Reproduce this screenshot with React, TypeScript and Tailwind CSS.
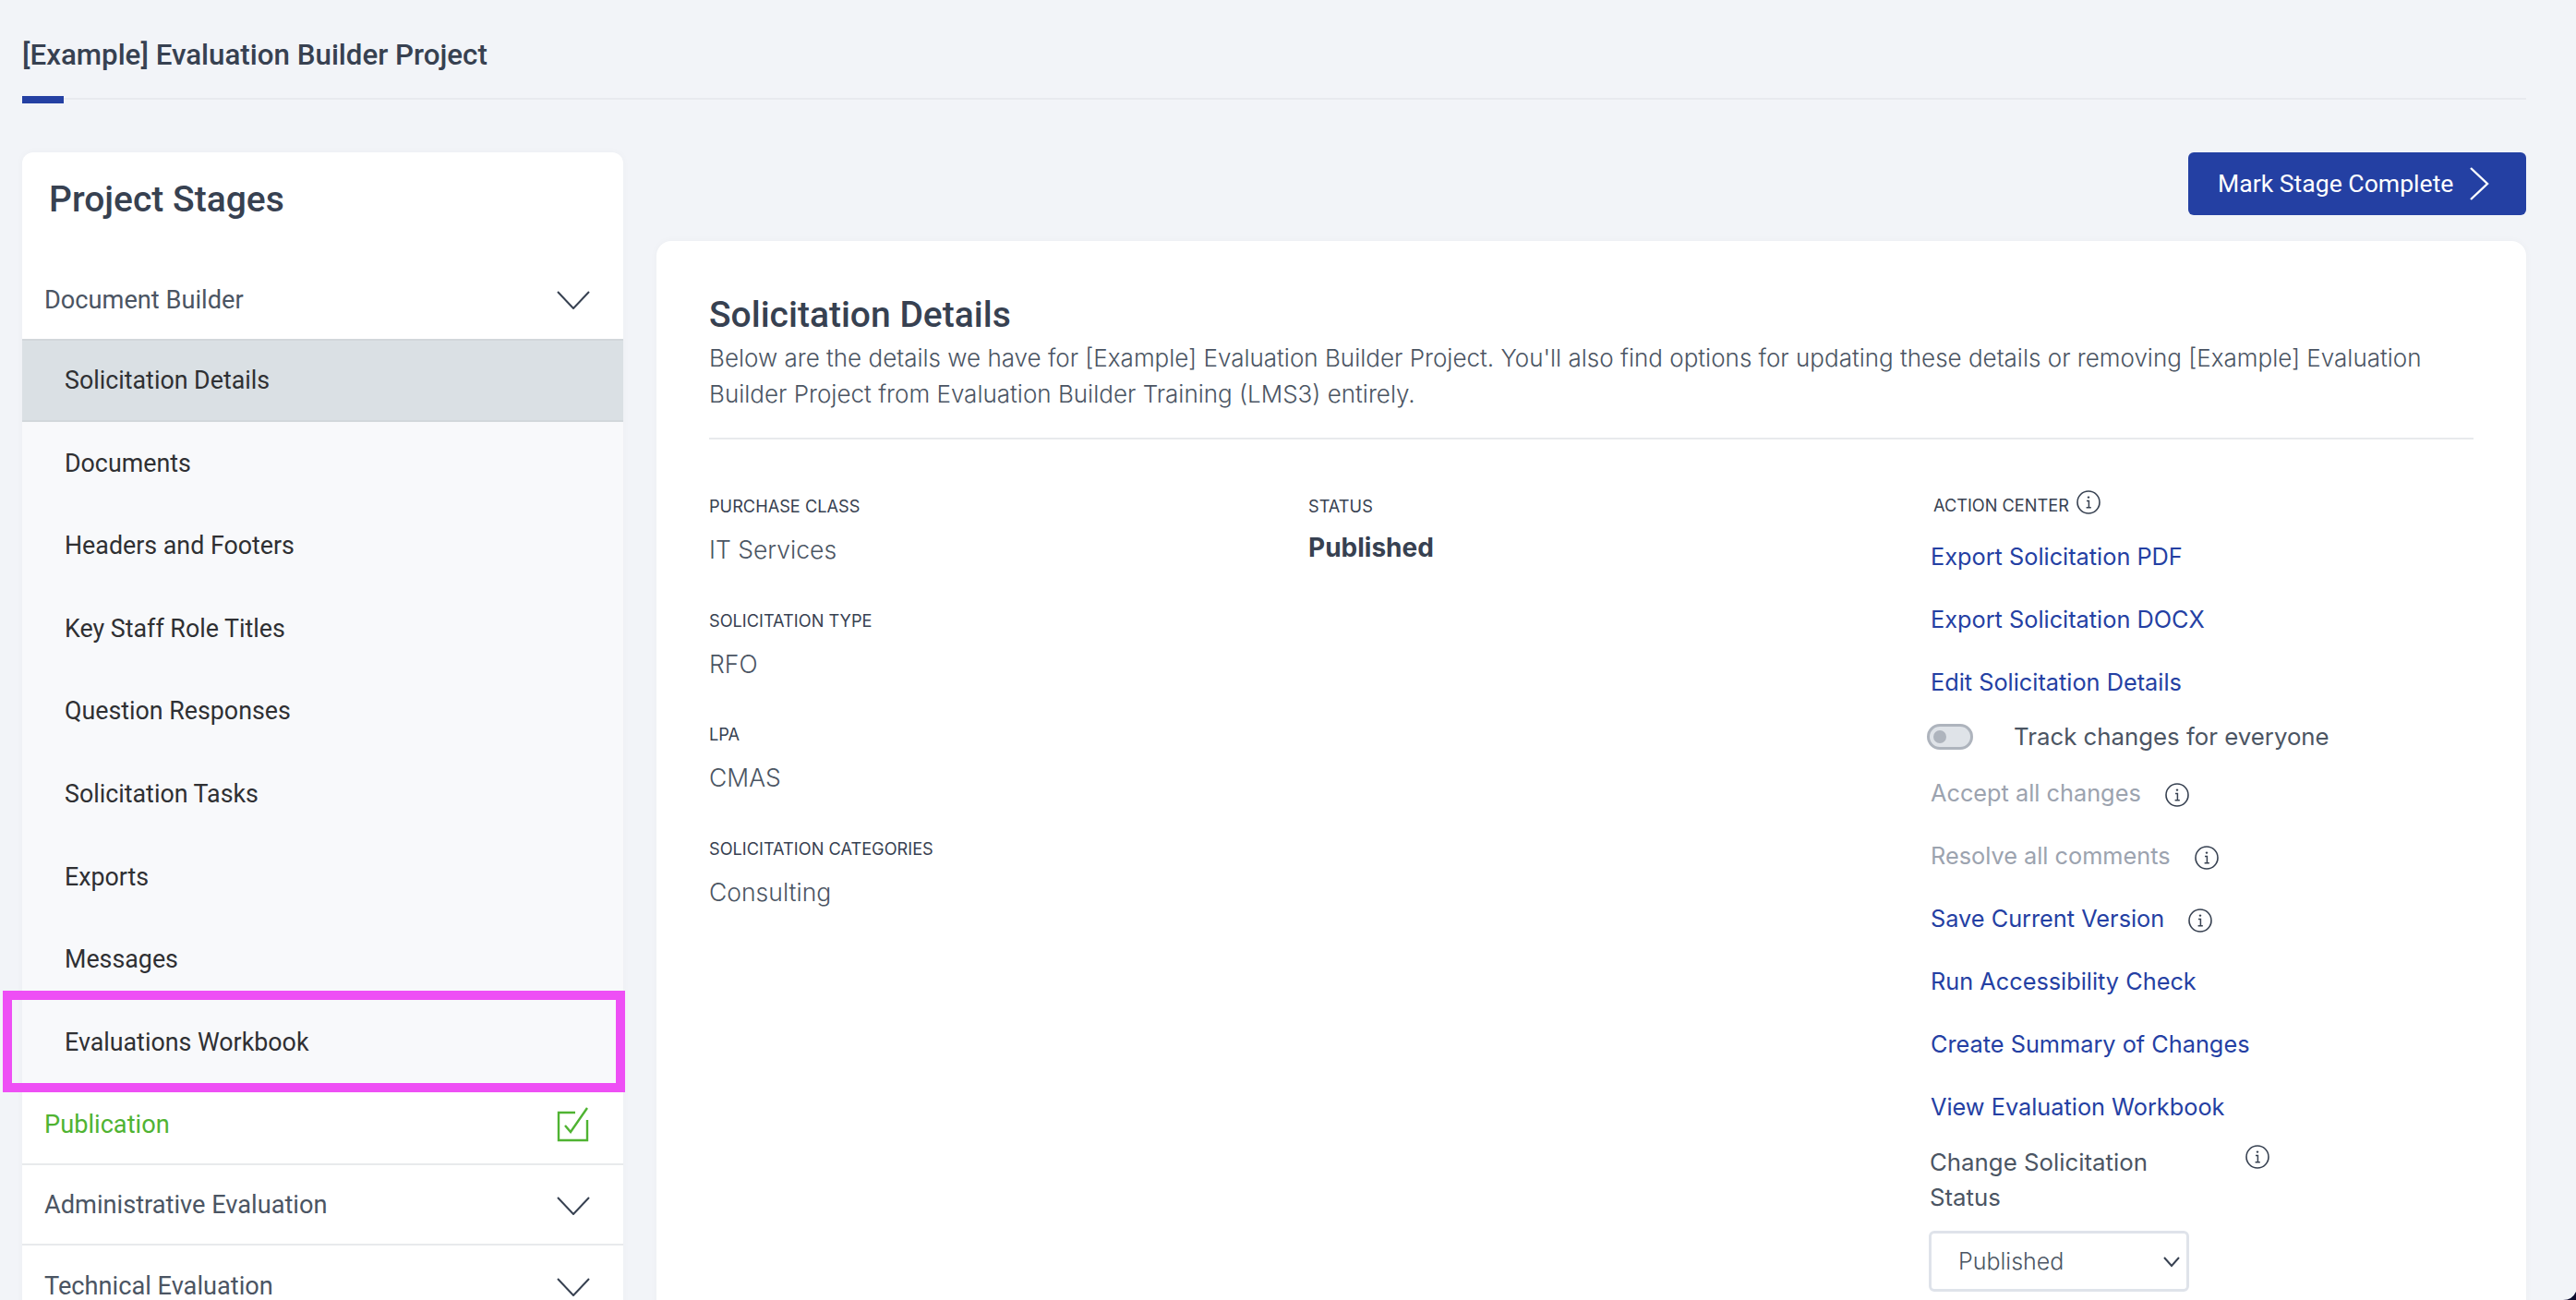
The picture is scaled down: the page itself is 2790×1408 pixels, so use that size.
import React from "react";

const rubik = "font-['Roboto',sans-serif]";
const inter = "font-['Inter',sans-serif]";

const subStages = [
  "Solicitation Details",
  "Documents",
  "Headers and Footers",
  "Key Staff Role Titles",
  "Question Responses",
  "Solicitation Tasks",
  "Exports",
  "Messages",
  "Evaluations Workbook",
];

const Chevron = () => (
  <svg width="36" height="20" viewBox="0 0 36 20" fill="none" stroke="#374151" strokeWidth="2">
    <path d="M1 1 L18 19 L35 1" />
  </svg>
);

const Info = () => (
  <svg width="26" height="26" viewBox="0 0 26 26" fill="none" stroke="#374151" className="shrink-0">
    <circle cx="13" cy="13" r="12" strokeWidth="1.6" />
    <path d="M11 11.5h2.4v7M10.6 18.8h5.2" strokeWidth="1.5" />
    <circle cx="13" cy="7.6" r="1.2" fill="#374151" stroke="none" />
  </svg>
);

const Detail = ({ label, value }: { label: string; value: string }) => (
  <div className="h-[123.6px]">
    <div className={`${inter} text-[18.2px] leading-[24px] text-[#374151]`}>{label}</div>
    <div className={`${inter} text-[26.5px] leading-[40px] mt-[15px] text-[#4b5563] font-light`}>{value}</div>
  </div>
);

const ActionLink = ({ children, info, muted }: { children: string; info?: number; muted?: boolean }) => (
  <div className="h-[68px] flex items-center">
    <span className={`${inter} text-[25.3px] ${muted ? "text-[#9ca3af]" : "text-[#2440a3]"}`}>{children}</span>
    {info ? (
      <span className="ml-[26px] mt-[3px]">
        <Info />
      </span>
    ) : null}
  </div>
);

export default function App() {
  return (
    <div className="relative w-[2790px] h-[1408px] overflow-hidden bg-[#f2f4f8]">
      <header className="pt-[40px] pl-[24px] h-[165px]">
        <h1 className={`${rubik} text-[31.3px] leading-[40px] font-medium text-[#374151]`}>[Example] Evaluation Builder Project</h1>
        <div className="relative mt-[26px] h-[2px] w-[2712px] bg-[#e8eaef]">
          <div className="absolute left-0 -top-[2px] w-[45px] h-[8px] bg-[#2440a3]" />
        </div>
      </header>

      <div className="flex pl-[24px] pr-[54px] gap-[36px]">
        <aside className="w-[651px] shrink-0 bg-white rounded-t-[12px] shadow-[0_0_8px_rgba(0,0,0,0.03)]">
          <h2 className={`${rubik} pl-[29px] pt-[27px] h-[115px] text-[39px] leading-[48px] font-medium text-[#374151]`}>Project Stages</h2>
          <div className="h-[87px] pl-[24px] pr-[36px] pt-[3px] flex items-center justify-between">
            <span className={`${rubik} text-[27.2px] text-[#4b5563]`}>Document Builder</span>
            <Chevron />
          </div>
          <ul className="bg-[#f8f9fb]">
            {subStages.map((s, i) => (
              <li
                key={s}
                className={`pl-[46px] flex items-center text-[26.8px] text-[#2f3033] ${rubik} ${
                  i === 0 ? "h-[90px] bg-[#dae0e4] border-y-2 border-[#d2d7db]" : "h-[89.6px]"
                }`}
              >
                {s}
              </li>
            ))}
          </ul>
          <div className="h-[88px] pl-[24px] pr-[36px] pt-[3px] flex items-center justify-between border-b-2 border-[#e8eaec]">
            <span className={`${rubik} text-[27.2px] text-[#4fb332]`}>Publication</span>
            <svg width="36" height="38" viewBox="0 0 36 38" fill="none" stroke="#4fb332" strokeWidth="2.4">
              <path d="M20 6H2v30h31V14" />
              <path d="M9 20l6 7L33 1" />
            </svg>
          </div>
          <div className="h-[87px] pl-[24px] pr-[36px] pt-[3px] flex items-center justify-between border-b-2 border-[#e8eaec]">
            <span className={`${rubik} text-[27.2px] text-[#4b5563]`}>Administrative Evaluation</span>
            <Chevron />
          </div>
          <div className="h-[87px] pl-[24px] pr-[36px] pt-[3px] flex items-center justify-between">
            <span className={`${rubik} text-[27.2px] text-[#4b5563]`}>Technical Evaluation</span>
            <Chevron />
          </div>
        </aside>

        <main className="flex-1">
          <div className="flex justify-end h-[96px]">
            <button className={`${rubik} w-[366px] h-[68px] bg-[#2440a3] rounded-[6px] text-white text-[26.6px] flex items-center pl-[32px] gap-[17px]`}>
              Mark Stage Complete
              <svg width="22" height="36" viewBox="0 0 22 36" fill="none" stroke="white" strokeWidth="2.4">
                <path d="M2 1l18 17L2 35" />
              </svg>
            </button>
          </div>
          <section className="bg-white rounded-t-[16px] px-[57px] pt-[56px] h-[1160px] shadow-[0_0_8px_rgba(0,0,0,0.03)]">
            <h2 className={`${rubik} text-[39px] leading-[48px] font-medium text-[#374151]`}>Solicitation Details</h2>
            <p className={`${inter} font-light text-[26px] leading-[39px] mt-[3px] text-[#4b5563]`}>
              Below are the details we have for [Example] Evaluation Builder Project. You'll also find options for updating these details or removing [Example] Evaluation Builder Project from Evaluation Builder Training (LMS3) entirely.
            </p>
            <hr className="mt-[28px] border-t-2 border-[#e8eaec]" />
            <div className="flex mt-[60px]">
              <div className="w-[649px]">
                <Detail label="PURCHASE CLASS" value="IT Services" />
                <Detail label="SOLICITATION TYPE" value="RFO" />
                <Detail label="LPA" value="CMAS" />
                <Detail label="SOLICITATION CATEGORIES" value="Consulting" />
              </div>
              <div className="w-[674px]">
                <div className={`${inter} text-[18.2px] leading-[24px] text-[#374151]`}>STATUS</div>
                <div className={`${inter} text-[28px] leading-[40px] mt-[13px] font-bold text-[#374151]`}>Published</div>
              </div>
              <div className="flex-1">
                <div className="flex items-center h-[24px] pl-[3px]">
                  <span className={`${inter} text-[18.2px] text-[#374151]`}>ACTION CENTER</span>
                  <span className="ml-[8px] -mt-[8px]">
                    <Info />
                  </span>
                </div>
                <div className="mt-[9px]">
                  <ActionLink>Export Solicitation PDF</ActionLink>
                  <ActionLink>Export Solicitation DOCX</ActionLink>
                  <ActionLink>Edit Solicitation Details</ActionLink>
                </div>
                <div className="flex items-center h-[54px] -ml-[4px] -mt-[2px]">
                  <span className="relative w-[50px] h-[28px] rounded-full bg-[#dfe3e8] border-[3px] border-[#aeb4bd]">
                    <span className="absolute left-[4px] top-[4px] w-[14px] h-[14px] rounded-full bg-[#aeb4bd]" />
                  </span>
                  <span className={`${inter} ml-[44px] text-[25.8px] text-[#4b5563]`}>Track changes for everyone</span>
                </div>
                <ActionLink muted info={1}>Accept all changes</ActionLink>
                <ActionLink muted info={1}>Resolve all comments</ActionLink>
                <ActionLink info={1}>Save Current Version</ActionLink>
                <ActionLink>Run Accessibility Check</ActionLink>
                <ActionLink>Create Summary of Changes</ActionLink>
                <ActionLink>View Evaluation Workbook</ActionLink>
                <div className="flex items-start -ml-[1px] mt-[7px] w-[370px]">
                  <span className={`${inter} text-[25.8px] leading-[38px] w-[342px] text-[#4b5563]`}>Change Solicitation<br />Status</span>
                  <Info />
                </div>
                <div className="mt-[17px] -ml-[2px] w-[282px] h-[66px] rounded-[6px] border-[3px] border-[#dfe3ea] flex items-center justify-between pl-[29px] pr-[7px] pt-[2px]">
                  <span className={`${inter} font-light text-[25px] text-[#4b5563]`}>Published</span>
                  <svg width="18" height="12" viewBox="0 0 18 12" fill="none" stroke="#374151" strokeWidth="2">
                    <path d="M1 1l8 9 8-9" />
                  </svg>
                </div>
              </div>
            </div>
          </section>
        </main>
      </div>

      {/* Magenta callout over the last stage */}
      <div className="absolute left-[3px] top-[1073px] w-[674px] h-[110px] border-[10px] border-[#ee4ff5] pointer-events-none" />
      {/* Window corner showing at the bottom right */}
      <svg className="absolute right-0 bottom-0" width="14" height="9" viewBox="0 0 14 9" fill="#0d0b2e">
        <path d="M14 0V9H0Q10 9 14 0Z" />
      </svg>
    </div>
  );
}
